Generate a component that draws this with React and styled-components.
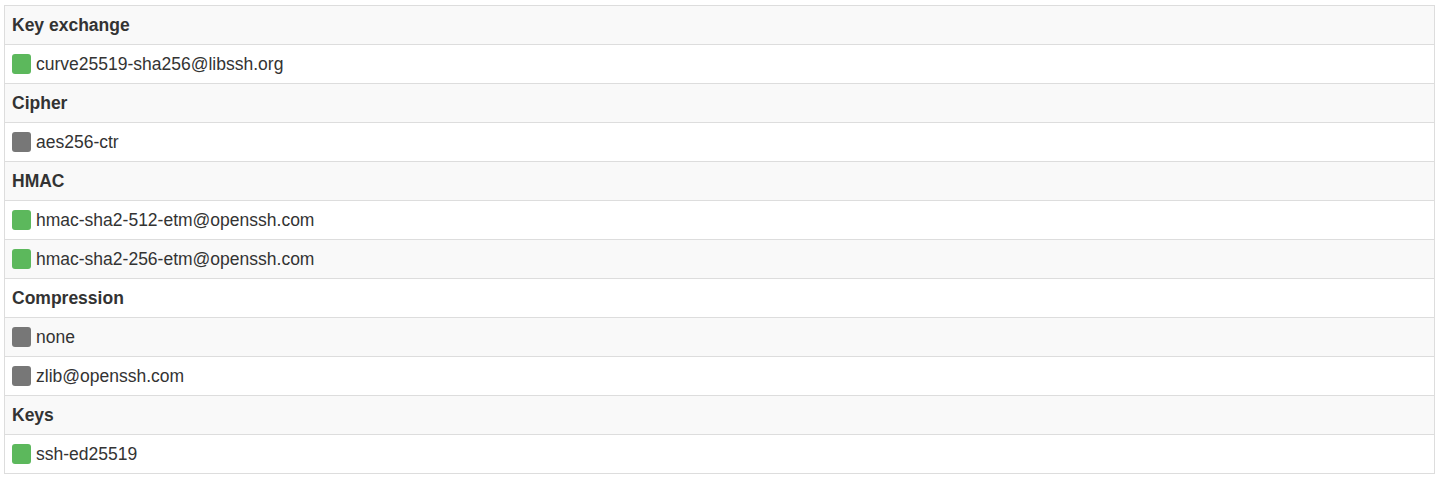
import React from "react";
import styled, { createGlobalStyle } from "styled-components";

const Global = createGlobalStyle`
  html, body { margin: 0; padding: 0; background: #fff; }
  body { font-family: "Liberation Sans", Arial, Helvetica, sans-serif; color: #333; }
`;

const Wrap = styled.div`
  padding: 5px 5px 0 4px;
`;

const Table = styled.table`
  width: 100%;
  border-collapse: collapse;
  border-spacing: 0;
  border: 1px solid #ddd;
  font-size: 17.5px;
  line-height: 22px;
`;

const Row = styled.tr`
  background: ${(p) => (p.$odd ? "#f9f9f9" : "#fff")};
`;

const Cell = styled.td`
  border-top: 1px solid #ddd;
  padding: 8px 7px;
  height: 22px;
  font-weight: ${(p) => (p.$head ? 700 : 400)};
  vertical-align: middle;
`;

const Item = styled.div`
  display: flex;
  align-items: center;
  gap: 5px;
  height: 22px;
`;

const Badge = styled.span`
  display: block;
  flex: none;
  width: 19px;
  height: 20px;
  border-radius: 3px;
  background: ${(p) => (p.$ok ? "#5cb85c" : "#777")};
`;

const rows = [
  { head: "Key exchange" },
  { text: "curve25519-sha256@libssh.org", ok: true },
  { head: "Cipher" },
  { text: "aes256-ctr", ok: false },
  { head: "HMAC" },
  { text: "hmac-sha2-512-etm@openssh.com", ok: true },
  { text: "hmac-sha2-256-etm@openssh.com", ok: true },
  { head: "Compression" },
  { text: "none", ok: false },
  { text: "zlib@openssh.com", ok: false },
  { head: "Keys" },
  { text: "ssh-ed25519", ok: true },
];

export default function App() {
  return (
    <Wrap>
      <Global />
      <Table>
        <tbody>
          {rows.map((r, i) => (
            <Row key={i} $odd={i % 2 === 0}>
              {r.head ? (
                <Cell $head>{r.head}</Cell>
              ) : (
                <Cell>
                  <Item>
                    <Badge $ok={r.ok} />
                    {r.text}
                  </Item>
                </Cell>
              )}
            </Row>
          ))}
        </tbody>
      </Table>
    </Wrap>
  );
}
